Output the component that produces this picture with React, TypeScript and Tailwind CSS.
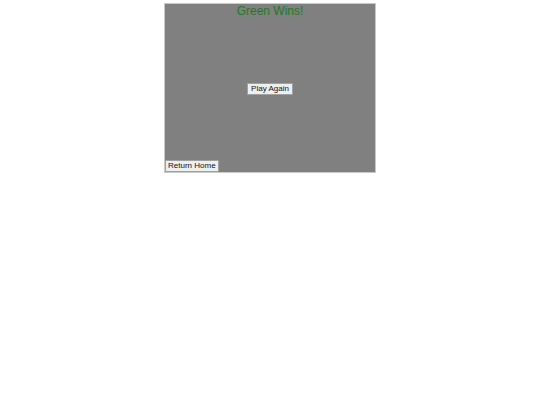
export default function App() {
  return (
    <div className="min-h-screen bg-white pt-[3px] antialiased">
      <div className="mx-auto flex h-[170px] w-[212px] flex-col border border-[#c8c8c8] bg-[#808080] font-['Liberation_Sans',Arial,sans-serif]">
        <h1 className="pt-[1px] text-center text-[12px] leading-[13px] font-normal text-[#1f7a1f]">Green Wins!</h1>
        <div className="flex flex-1 items-start justify-center pt-[65px]">
          <button className="border border-[#a0a0a0] bg-[#efefef] px-[3px] text-[8px] leading-[10px] font-normal text-[#111]">
            Play Again
          </button>
        </div>
        <div className="flex">
          <button className="border border-[#a0a0a0] bg-[#efefef] px-[2px] text-[8px] leading-[10px] font-normal text-[#111]">
            Return Home
          </button>
        </div>
      </div>
    </div>
  );
}
